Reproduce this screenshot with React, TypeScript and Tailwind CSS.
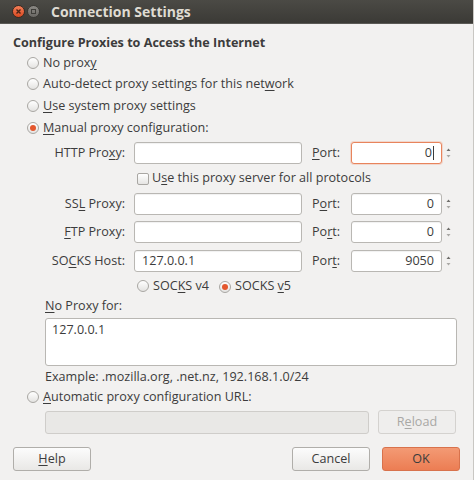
import React from "react";

const font = { fontFamily: '"Open Sans", "DejaVu Sans", sans-serif' };

function U({ children }: { children: React.ReactNode }) {
  return <span className="underline underline-offset-2 decoration-1">{children}</span>;
}

function Radio({ checked = false }: { checked?: boolean }) {
  return (
    <span className="inline-flex w-[12px] h-[12px] rounded-full border border-[#a9a7a3] bg-gradient-to-b from-[#ffffff] to-[#e4e3e1] items-center justify-center shrink-0">
      {checked && <span className="w-[6px] h-[6px] rounded-full bg-[#e4572e]" />}
    </span>
  );
}

function Spinner() {
  return (
    <svg width="9" height="22" viewBox="0 0 9 22" className="ml-[2px]">
      <path d="M2.5 9 L4.5 6.5 L6.5 9 Z" fill="#6e6d6a" />
      <path d="M2.5 13 L4.5 15.5 L6.5 13 Z" fill="#a9a8a5" />
    </svg>
  );
}

function Field({ w, value = "", focus = false, right = false }: { w: string; value?: string; focus?: boolean; right?: boolean }) {
  return (
    <div
      className={`${w} h-[22px] rounded-[3px] bg-white flex items-center px-[7px] text-[12.6px] text-[#3c3c3c] ${
        right ? "justify-end" : ""
      } ${focus ? "border border-[#e8845c] shadow-[0_0_0_1px_rgba(240,140,100,0.25)]" : "border border-[#b9b7b3] shadow-[inset_0_1px_1px_rgba(0,0,0,0.06)]"}`}
    >
      {value}
      {focus && <span className="w-[1px] h-[14px] bg-[#3c3c3c] ml-[1px]" />}
    </div>
  );
}

function ProxyRow({ label, value = "", port, focus = false }: { label: React.ReactNode; value?: string; port: React.ReactNode; focus?: boolean }) {
  return (
    <div className="flex items-center h-[22px]">
      <div className="w-[112px] text-right">{label}</div>
      <div className="ml-[9px]">
        <Field w="w-[168px]" value={value} />
      </div>
      <div className="ml-[10px] w-[39px]">{port}</div>
      <Field w="w-[91px]" value={focus ? "0" : value === "127.0.0.1" ? "9050" : "0"} focus={focus} right />
      <Spinner />
    </div>
  );
}

function Button({ children, primary = false, disabled = false, w = "w-[78px]" }: { children: React.ReactNode; primary?: boolean; disabled?: boolean; w?: string }) {
  return (
    <div
      className={`${w} h-[24px] rounded-[3px] flex items-center justify-center text-[12.6px] ${
        primary
          ? "bg-gradient-to-b from-[#f39a74] to-[#ec7d53] border border-[#d8724c] text-[#3c3c3c]"
          : disabled
          ? "bg-[#efeeed] border border-[#d4d2cf] text-[#a9a8a5]"
          : "bg-gradient-to-b from-[#fcfcfc] to-[#e9e8e6] border border-[#b0aeaa] text-[#3c3c3c]"
      }`}
    >
      {children}
    </div>
  );
}

export default function App() {
  return (
    <div className="w-[474px] h-[480px] bg-[#f2f1f0] text-[12.6px] text-[#3c3c3c] overflow-hidden border-r border-[#c9c7c3]" style={font}>
      {/* title bar */}
      <div className="h-[24px] bg-gradient-to-b from-[#4b4a45] to-[#3b3a36] flex items-center border-b border-[#5a5955]">
        <div className="ml-[12px] w-[13px] h-[13px] rounded-full bg-gradient-to-b from-[#f27e57] to-[#d9481f] flex items-center justify-center border border-[#3a2a22]">
          <svg width="7" height="7" viewBox="0 0 7 7">
            <path d="M1.5 1.5 L5.5 5.5 M5.5 1.5 L1.5 5.5" stroke="#4a2416" strokeWidth="1.4" />
          </svg>
        </div>
        <div className="ml-[2px] w-[13px] h-[13px] rounded-full bg-gradient-to-b from-[#8a8883] to-[#6a6864] flex items-center justify-center border border-[#3a3935]">
          <span className="w-[5px] h-[5px] border border-[#3f3e3a]" />
        </div>
        <div className="ml-[11px] text-[14px] font-bold text-[#dfdbd2]">Connection Settings</div>
      </div>

      <div className="px-[13px]">
        <div className="h-[20px] mt-[9px] flex items-center font-bold">Configure Proxies to Access the Internet</div>

        <div className="pl-[14px]">
          <div className="h-[20px] flex items-center gap-[4px]">
            <Radio /> <span>No prox<U>y</U></span>
          </div>
          <div className="h-[22px] flex items-center gap-[4px]">
            <Radio /> <span>Auto-detect proxy settings for this net<U>w</U>ork</span>
          </div>
          <div className="h-[22px] flex items-center gap-[4px]">
            <Radio /> <span><U>U</U>se system proxy settings</span>
          </div>
          <div className="h-[22px] flex items-center gap-[4px]">
            <Radio checked /> <span><U>M</U>anual proxy configuration:</span>
          </div>
        </div>

        <div className="mt-[3px]">
          <ProxyRow label={<>HTTP Pro<U>x</U>y:</>} port={<><U>P</U>ort:</>} focus />
          <div className="h-[29px] flex items-center pl-[124px] gap-[3px]">
            <span className="w-[12px] h-[12px] rounded-[2px] border border-[#a9a7a3] bg-gradient-to-b from-white to-[#e6e5e3]" />
            <span>U<U>s</U>e this proxy server for all protocols</span>
          </div>
          <ProxyRow label={<>SS<U>L</U> Proxy:</>} port={<>P<U>o</U>rt:</>} />
          <div className="h-[6px]" />
          <ProxyRow label={<><U>F</U>TP Proxy:</>} port={<>Po<U>r</U>t:</>} />
          <div className="h-[7px]" />
          <ProxyRow label={<>SO<U>C</U>KS Host:</>} value="127.0.0.1" port={<>Por<U>t</U>:</>} />
          <div className="h-[24px] mt-[2px] flex items-center pl-[124px]">
            <Radio />
            <span className="ml-[4px]">SOC<U>K</U>S v4</span>
            <span className="ml-[10px]"><Radio checked /></span>
            <span className="ml-[4px]">SOCKS <U>v</U>5</span>
          </div>
        </div>

        <div className="pl-[32px]">
          <div className="h-[16px] flex items-center"><span><U>N</U>o Proxy for:</span></div>
          <div className="mt-[4px] w-[412px] h-[48px] bg-white border border-[#b9b7b3] rounded-[3px] px-[6px] pt-[2px] leading-[18px]">
            127.0.0.1
          </div>
          <div className="h-[18px] mt-[2px] flex items-center">Example: .mozilla.org, .net.nz, 192.168.1.0/24</div>
        </div>

        <div className="pl-[14px] h-[22px] flex items-center gap-[4px]">
          <Radio /> <span><U>A</U>utomatic proxy configuration URL:</span>
        </div>

        <div className="pl-[32px] mt-[2px] flex items-center">
          <div className="w-[324px] h-[23px] rounded-[3px] bg-[#e9e8e6] border border-[#cfcdca]" />
          <div className="ml-[9px]">
            <Button disabled>R<U>e</U>load</Button>
          </div>
        </div>

        <div className="mt-[13px] flex items-center">
          <Button><U>H</U>elp</Button>
          <div className="flex-1" />
          <Button>Cancel</Button>
          <div className="ml-[12px] mr-[0px]">
            <Button primary>OK</Button>
          </div>
        </div>
      </div>
    </div>
  );
}
